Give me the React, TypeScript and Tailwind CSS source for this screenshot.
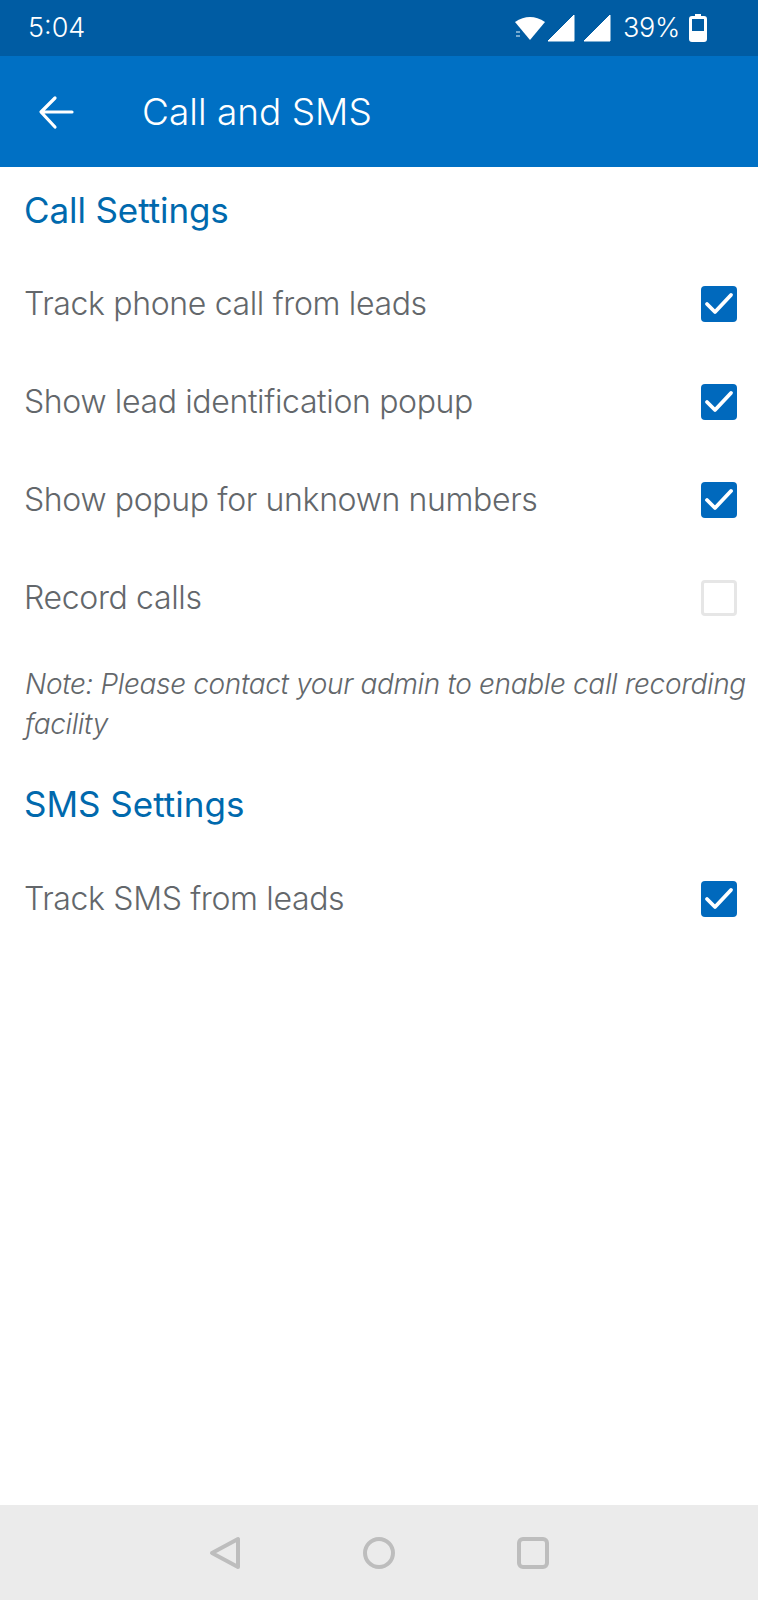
import React, {FC} from "react";

interface RowProps {
    label: string;
    checked: boolean;
}

const Row: FC<RowProps> = ({label, checked}) => (
    <div className="flex h-[98px] items-center justify-between pl-[24px] pr-[21px]">
        <span className="text-[32px] leading-[40px] font-light tracking-[-0.35px] text-[#63676b]">{label}</span>
        {checked ? (
            <span className="flex h-[36px] w-[36px] items-center justify-center rounded-[4px] bg-[#0069bd]">
                <svg width="36" height="36" viewBox="0 0 36 36" fill="none">
                    <path d="M6 18 L14 26 L30 9" stroke="#fff" strokeWidth="3.8" strokeLinecap="round" strokeLinejoin="round"/>
                </svg>
            </span>
        ) : (
            <span className="h-[36px] w-[36px] rounded-[4px] border-[3px] border-[#e6e6e6]"></span>
        )}
    </div>
);

export default function App() {
    return (
        <div className="flex h-[1600px] w-[758px] flex-col bg-white font-['Inter',sans-serif]">
            <div className="flex h-[56px] items-center justify-between bg-[#005ca3] pl-[28px] pr-[51px] text-white">
                <span className="text-[27px] font-light">5:04</span>
                <div className="flex items-center">
                    <svg width="32" height="26" viewBox="0 0 32 26" className="mr-[1px]">
                        <path d="M1 7 Q16 -3 31 7 L16 25 Z" fill="#fff"/>
                        <path d="M2 17 h4 M2 21 h4" stroke="#9cc3e0" strokeWidth="1.5"/>
                    </svg>
                    <svg width="28" height="28" viewBox="0 0 28 28" className="mr-[8px]">
                        <path d="M27 1 V27 H1 Z" fill="#fff" stroke="#fff" strokeLinejoin="round"/>
                    </svg>
                    <svg width="28" height="28" viewBox="0 0 28 28" className="mr-[12px]">
                        <path d="M27 1 V27 H1 Z" fill="#fff" stroke="#fff" strokeLinejoin="round"/>
                    </svg>
                    <span className="mr-[9px] text-[27px] font-light tracking-[-0.3px]">39%</span>
                    <svg width="18" height="28" viewBox="0 0 18 28">
                        <path d="M6 0 H12 V2 H15 Q18 2 18 5 V25 Q18 28 15 28 H3 Q0 28 0 25 V5 Q0 2 3 2 H6 Z" fill="#fff"/>
                        <rect x="3" y="5" width="12" height="12" fill="#005ca3"/>
                    </svg>
                </div>
            </div>
            <div className="flex h-[111px] items-center bg-[#0070c4] text-white">
                <svg width="36" height="36" viewBox="0 0 36 36" fill="none" className="ml-[38px]">
                    <path d="M34 18 H4 M17 4 L3 18 L17 33" stroke="#fff" strokeWidth="3.2" strokeLinecap="round" strokeLinejoin="round"/>
                </svg>
                <span className="ml-[68px] text-[37px] font-light tracking-[0px]">Call and SMS</span>
            </div>
            <div className="flex flex-1 flex-col">
                <div className="mt-[21px] pl-[24px] text-[35px] leading-[44px] tracking-[-0.1px] text-[#0069ad]">Call Settings</div>
                <div className="mt-[23px]">
                    <Row label="Track phone call from leads" checked={true}/>
                    <Row label="Show lead identification popup" checked={true}/>
                    <Row label="Show popup for unknown numbers" checked={true}/>
                    <Row label="Record calls" checked={false}/>
                </div>
                <p className="mt-[17px] pl-[25px] pr-[8px] text-[28px] leading-[40px] font-light italic tracking-[-0.35px] text-[#63676b]">
                    Note: Please contact your admin to enable call recording facility
                </p>
                <div className="mt-[38px] pl-[24px] text-[35px] leading-[44px] tracking-[0px] text-[#0069ad]">SMS Settings</div>
                <div className="mt-[24px]">
                    <Row label="Track SMS from leads" checked={true}/>
                </div>
            </div>
            <div className="flex h-[95px] items-center justify-center gap-[122px] bg-[#ebebeb]">
                <svg width="32" height="34" viewBox="0 0 32 34" fill="none">
                    <path d="M29 3 V31 L3 17 Z" stroke="#bdbdbd" strokeWidth="4" strokeLinejoin="round"/>
                </svg>
                <svg width="32" height="32" viewBox="0 0 32 32" fill="none">
                    <circle cx="16" cy="16" r="14" stroke="#bdbdbd" strokeWidth="4"/>
                </svg>
                <svg width="32" height="32" viewBox="0 0 32 32" fill="none">
                    <rect x="2" y="2" width="28" height="28" rx="4" stroke="#bdbdbd" strokeWidth="4"/>
                </svg>
            </div>
        </div>
    );
}
